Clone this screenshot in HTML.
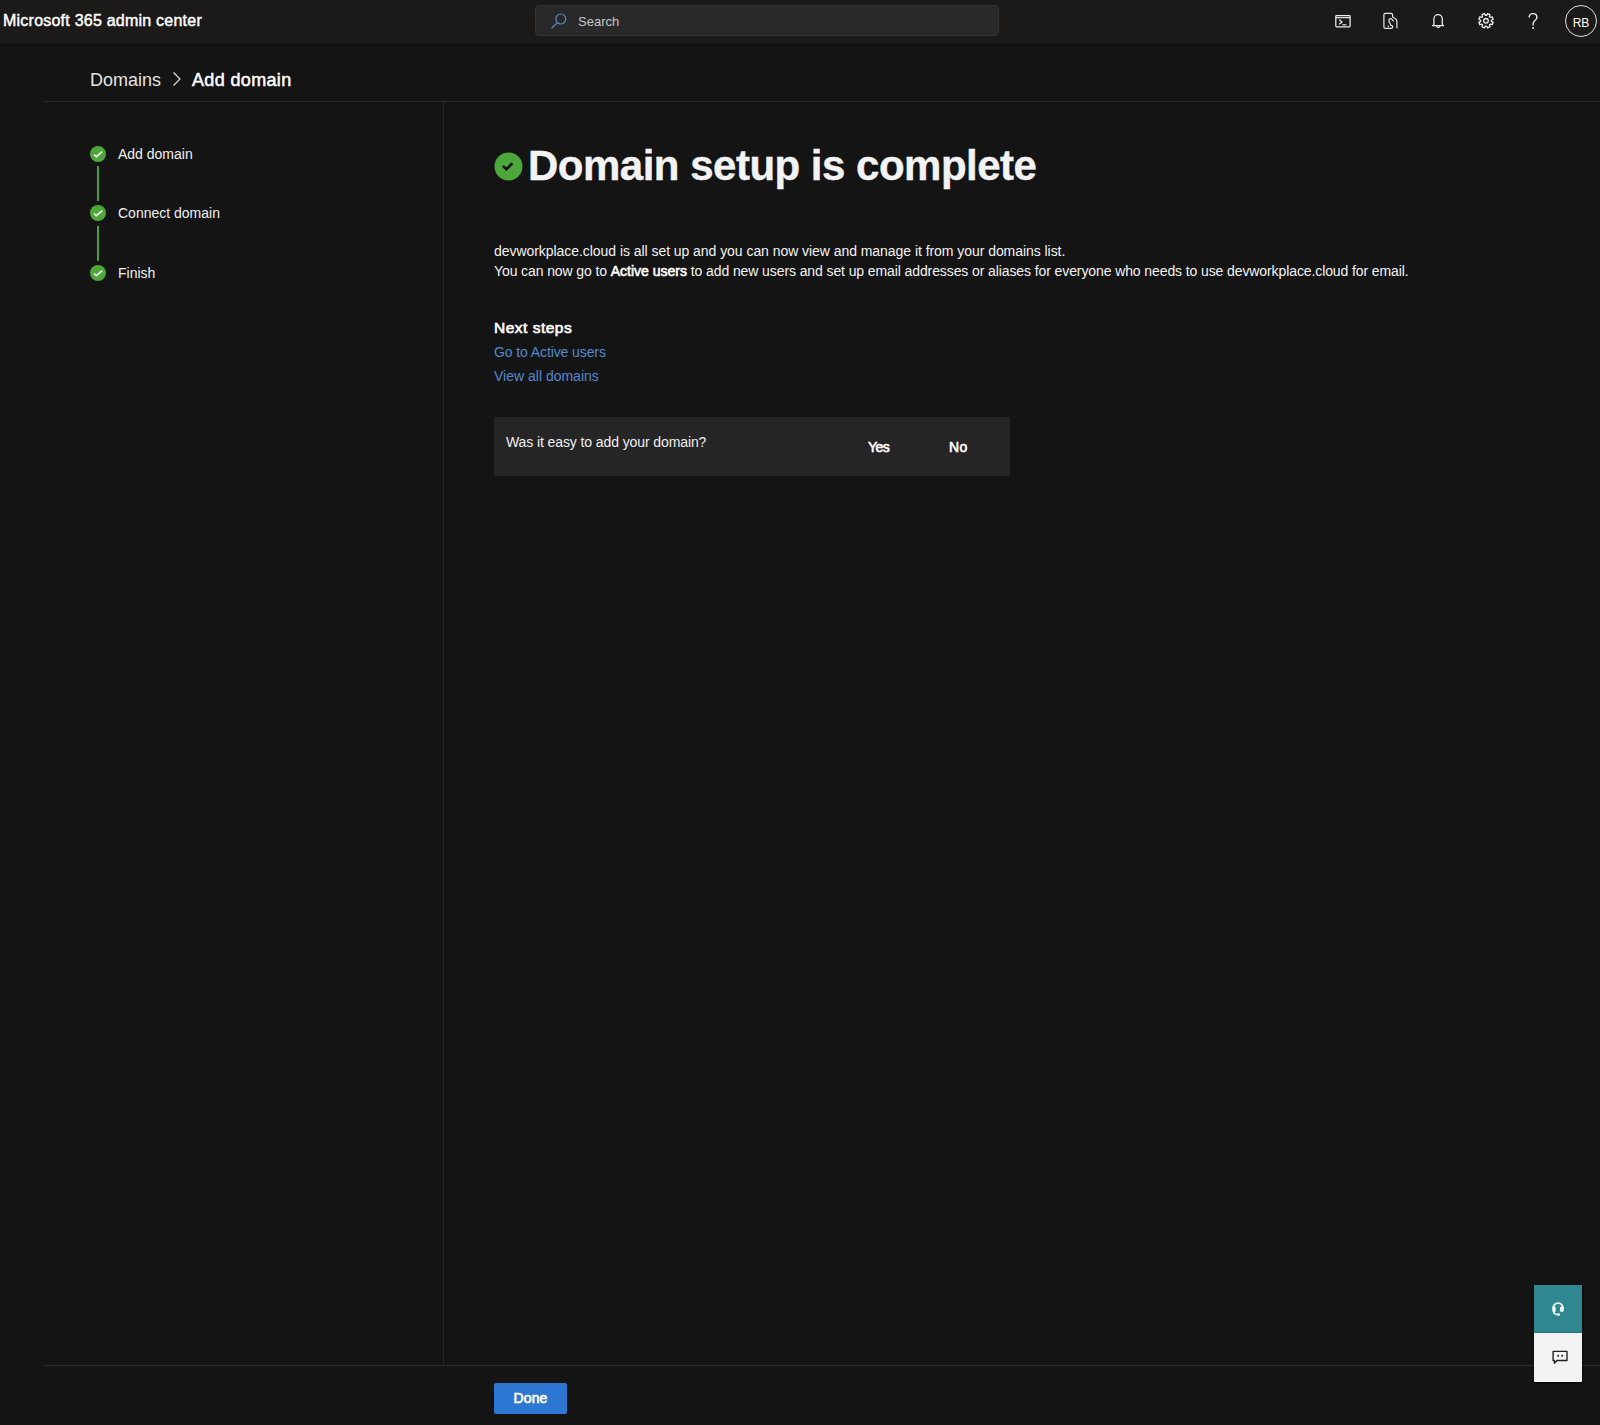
<!DOCTYPE html>
<html><head><meta charset="utf-8">
<style>
*{box-sizing:border-box;margin:0;padding:0}
html,body{width:1600px;height:1425px;overflow:hidden;background:#141414;font-family:"Liberation Sans",sans-serif;color:#fff}
.abs{position:absolute}
#top{position:absolute;left:0;top:0;width:1600px;height:44px;background:#1c1a19;box-shadow:0 1px 2px rgba(0,0,0,.35)}
#brand{position:absolute;left:3px;top:11px;font-size:16px;letter-spacing:0.23px;font-weight:normal;-webkit-text-stroke:0.45px #fff;color:#fff;white-space:nowrap;line-height:20px}
#search{position:absolute;left:535px;top:5px;width:464px;height:31px;background:#292929;border:1px solid #333;border-radius:4px}
#search .t{position:absolute;left:42px;top:8px;font-size:13px;color:#c8c8c8;line-height:16px}
.ic{position:absolute}
#hline1{position:absolute;left:43px;top:101px;width:1557px;height:1px;background:#282828}
#hline2{position:absolute;left:43px;top:1365px;width:1557px;height:1px;background:#2c2c2c}
#vline{position:absolute;left:443px;top:102px;width:1px;height:1263px;background:#262626}
.crumb{position:absolute;top:69px;font-size:18px;line-height:22px;white-space:nowrap}
.step{position:absolute;left:90px;width:16px;height:16px;border-radius:50%;background:#4ea73a}
.steptxt{position:absolute;left:118px;font-size:14px;line-height:16px;color:#f0f0f0;white-space:nowrap}
.sline{position:absolute;left:97.25px;width:1.5px;background:#4a9d38}
#title{position:absolute;left:528px;top:140.5px;font-size:42px;letter-spacing:-0.5px;-webkit-text-stroke:0.4px #f3f3f3;font-weight:bold;line-height:50px;white-space:nowrap;color:#f3f3f3}
.p{position:absolute;left:494px;font-size:14px;line-height:20px;white-space:nowrap;color:#f3f3f3}
.link{position:absolute;left:494px;font-size:14px;line-height:18px;color:#5388d0;white-space:nowrap}
#fb{position:absolute;left:494px;top:417px;width:516px;height:59px;background:#252525}
#done{position:absolute;left:494px;top:1383px;width:73px;height:31px;background:#2d77d3;border-radius:2px;color:#fff;font-weight:normal;-webkit-text-stroke:0.65px #fff;letter-spacing:0.1px;font-size:14px;text-align:center;line-height:31px}
#teal{position:absolute;left:1534px;top:1285px;width:48px;height:48px;background:#2f8891;box-shadow:0 0 3px rgba(0,0,0,.9)}
#white{position:absolute;left:1534px;top:1333px;width:48px;height:49px;background:#f3f3f3;border-radius:0 0 1px 1px;box-shadow:0 1px 3px rgba(0,0,0,.9)}
</style></head><body>
<div id="top">
  <div id="brand">Microsoft 365 admin center</div>
  <div id="search">
    <svg class="ic" style="left:13px;top:7px" width="18" height="18" viewBox="0 0 18 18"><circle cx="11.8" cy="6" r="5" fill="none" stroke="#5a86c2" stroke-width="1.2"/><line x1="8.3" y1="9.6" x2="2.6" y2="15.3" stroke="#5a86c2" stroke-width="1.3"/></svg>
    <div class="t">Search</div>
  </div>
  <!-- terminal -->
  <svg class="ic" style="left:1331px;top:9px" width="24" height="24" viewBox="0 0 24 24"><rect x="4.8" y="6.7" width="14.3" height="11.2" rx="0.8" fill="none" stroke="#eee" stroke-width="1.25"/><line x1="4.8" y1="8.7" x2="19.1" y2="8.7" stroke="#eee" stroke-width="1.2"/><polyline points="8.3,10.8 11,13.1 8.3,15.3" fill="none" stroke="#f2f2f2" stroke-width="1.25"/><line x1="11.4" y1="15.8" x2="15.4" y2="15.8" stroke="#f2f2f2" stroke-width="1.1"/></svg>
  <!-- phone hand -->
  <svg class="ic" style="left:1378px;top:8px" width="24" height="24" viewBox="0 0 24 24"><path d="M14.6 9.3 V6.9 Q14.6 5.4 13.1 5.4 H7.4 Q5.9 5.4 5.9 6.9 V18.9 Q5.9 20.4 7.4 20.4 H13.1 Q14.6 20.4 14.6 18.9 V17.8" fill="none" stroke="#e8e8e8" stroke-width="1.2"/><path d="M14.6 9.3 Q18.9 10.8 18.9 13.6 V20.3" fill="none" stroke="#e8e8e8" stroke-width="1.2"/><path d="M15.6 13.4 L13.6 10.9 Q11.6 10.1 10.9 11.8 Q10.6 13 11.6 14.6 Q12.3 16 12.6 16.9 Q13.1 17.8 14.6 17.8" fill="none" stroke="#e8e8e8" stroke-width="1.2"/><circle cx="10.4" cy="18.3" r="0.8" fill="#eee"/></svg>
  <!-- bell -->
  <svg class="ic" style="left:1426px;top:8px" width="24" height="24" viewBox="0 0 24 24"><path d="M7.9 17.2 V10.8 A4.2 4.2 0 0 1 16.3 10.8 V17.2 L17.6 17.6 H6.6 Z" fill="none" stroke="#eee" stroke-width="1.25" stroke-linejoin="round"/><path d="M10.6 18.1 A1.6 1.5 0 0 0 13.8 18.1" fill="none" stroke="#eee" stroke-width="1.2"/></svg>
  <!-- gear -->
  <svg class="ic" style="left:1474px;top:8px" width="24" height="24" viewBox="0 0 24 24"><path d="M17.37 13.33 L19.13 14.36 L18.15 16.74 L16.17 16.23 L15.43 16.97 L15.94 18.95 L13.56 19.93 L12.53 18.17 L11.47 18.17 L10.44 19.93 L8.06 18.95 L8.57 16.97 L7.83 16.23 L5.85 16.74 L4.87 14.36 L6.63 13.33 L6.63 12.27 L4.87 11.24 L5.85 8.86 L7.83 9.37 L8.57 8.63 L8.06 6.65 L10.44 5.67 L11.47 7.43 L12.53 7.43 L13.56 5.67 L15.94 6.65 L15.43 8.63 L16.17 9.37 L18.15 8.86 L19.13 11.24 L17.37 12.27 Z" fill="none" stroke="#eee" stroke-width="1.3" stroke-linejoin="round"/><circle cx="12" cy="12.8" r="2.3" fill="none" stroke="#eee" stroke-width="1.3"/></svg>
  <!-- help -->
  <svg class="ic" style="left:1521px;top:8px" width="24" height="24" viewBox="0 0 24 24"><path d="M8.1 9.6 Q8.1 5.6 12 5.6 Q15.9 5.6 15.9 9.2 Q15.9 11.2 14 12.5 Q12.1 13.8 12.1 16 V17.6" fill="none" stroke="#eee" stroke-width="1.4"/><circle cx="12.1" cy="20" r="0.95" fill="#eee"/></svg>
  <!-- avatar -->
  <div class="abs" style="left:1565px;top:5px;width:32px;height:32px;border:1.5px solid #ddd;border-radius:50%"></div>
  <div class="abs" style="left:1565px;top:16px;width:32px;text-align:center;font-size:12px;line-height:14px;color:#fff">RB</div>
</div>

<div class="crumb" style="left:90px;top:68.5px;color:#e3e3e3">Domains</div>
<svg class="ic" style="left:171px;top:71px" width="12" height="16" viewBox="0 0 12 16"><polyline points="2.5,1.5 9,8 2.5,14.5" fill="none" stroke="#ddd" stroke-width="1.2"/></svg>
<div class="crumb" style="left:192px;font-weight:normal;-webkit-text-stroke:0.5px #fff;color:#fff;letter-spacing:0.35px">Add domain</div>
<div id="hline1"></div>
<div id="vline"></div>
<div id="hline2"></div>

<!-- steps -->
<div class="step" style="top:146px"><svg width="16" height="16" viewBox="0 0 16 16"><polyline points="4,8.6 6.4,10.6 12.2,5.6" fill="none" stroke="#f4fff0" stroke-width="1.6"/></svg></div>
<div class="sline" style="top:166px;height:35px"></div>
<div class="step" style="top:205px"><svg width="16" height="16" viewBox="0 0 16 16"><polyline points="4,8.6 6.4,10.6 12.2,5.6" fill="none" stroke="#f4fff0" stroke-width="1.6"/></svg></div>
<div class="sline" style="top:226px;height:35px"></div>
<div class="step" style="top:265px"><svg width="16" height="16" viewBox="0 0 16 16"><polyline points="4,8.6 6.4,10.6 12.2,5.6" fill="none" stroke="#f4fff0" stroke-width="1.6"/></svg></div>
<div class="steptxt" style="top:146px">Add domain</div>
<div class="steptxt" style="top:205px">Connect domain</div>
<div class="steptxt" style="top:265px">Finish</div>

<!-- main -->
<svg class="ic" style="left:494px;top:152px" width="29" height="29" viewBox="0 0 29 29"><circle cx="14.5" cy="14.5" r="14" fill="#4ea73a"/><polyline points="9,14 12.4,17.2 18.4,11.3" fill="none" stroke="#111" stroke-width="2.6"/></svg>
<div id="title">Domain setup is complete</div>
<div class="p" style="top:241px;letter-spacing:-0.05px">devworkplace.cloud is all set up and you can now view and manage it from your domains list.</div>
<div class="p" style="top:261px;letter-spacing:-0.1px">You can now go to <b style="font-weight:normal;-webkit-text-stroke:0.6px #fff;letter-spacing:0px">Active users</b> to add new users and set up email addresses or aliases for everyone who needs to use devworkplace.cloud for email.</div>
<div class="p" style="top:318px;font-size:15.5px;font-weight:normal;-webkit-text-stroke:0.65px #fff;letter-spacing:0.5px;color:#fff">Next steps</div>
<div class="link" style="top:343px;letter-spacing:-0.1px">Go to Active users</div>
<div class="link" style="top:367px">View all domains</div>

<div id="fb">
  <div class="abs" style="left:12px;top:17px;font-size:14px;line-height:16px;color:#f0f0f0;white-space:nowrap;letter-spacing:-0.1px">Was it easy to add your domain?</div>
  <div class="abs" style="left:374px;top:22px;font-size:14px;line-height:16px;font-weight:normal;-webkit-text-stroke:0.6px #fff;color:#fff;letter-spacing:-0.6px">Yes</div>
  <div class="abs" style="left:455px;top:22px;font-size:14px;line-height:16px;font-weight:normal;-webkit-text-stroke:0.6px #fff;letter-spacing:0.4px;color:#fff">No</div>
</div>

<div id="done">Done</div>
<div id="teal"><svg style="position:absolute;left:12px;top:12px" width="24" height="24" viewBox="0 0 24 24"><path d="M7.3 12.5 V10.8 A4.75 4.75 0 0 1 16.8 10.8 V12.5" fill="none" stroke="#f0ffff" stroke-width="1.8"/><rect x="6.4" y="9.5" width="3.2" height="5.6" rx="1" fill="#f0ffff"/><rect x="14" y="9.7" width="3.7" height="5.1" rx="1" fill="#f0ffff"/><path d="M7.6 14.5 Q7.8 17.4 11 17.4" fill="none" stroke="#f0ffff" stroke-width="1.5"/><ellipse cx="12.3" cy="17.5" rx="1.8" ry="1.25" fill="#f0ffff"/></svg></div>
<div id="white"><svg style="position:absolute;left:12px;top:12px" width="24" height="24" viewBox="0 0 24 24"><path d="M7.1 6.4 H21 V15.5 H11 L8.4 18.3 V15.5 H7.1 Z" fill="none" stroke="#222" stroke-width="1.4" stroke-linejoin="round"/><circle cx="12.2" cy="10.8" r="0.95" fill="#111"/><circle cx="16.2" cy="10.8" r="0.95" fill="#111"/></svg></div>
</body></html>
